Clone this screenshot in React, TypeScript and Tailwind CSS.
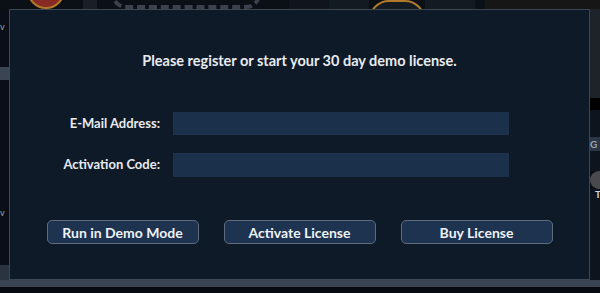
import React from 'react';

const buttonClass =
  'w-[152px] h-[24px] rounded-[5px] border border-[#5d6d7f] bg-[#1d3350] text-[14px] text-[#eef1f4] font-bold';

export default function App() {
  return (
    <div className="w-[600px] h-[293px] overflow-hidden bg-[#0a0f17] font-['Lato',sans-serif] flex flex-col">
      {/* Top strip of the app behind the dialog */}
      <div className="h-[9px] flex overflow-hidden bg-[#0b0f16]">
        <div className="w-[27px]" />
        <div className="w-[38px] h-[38px] -mt-[29px] rounded-full bg-[#8a2a24] border-2 border-[#b07a2a]" />
        <div className="w-[18px]" />
        <div className="w-[14px] bg-[#1a1f27]" />
        <div className="w-[14px]" />
        <div className="w-[150px] h-[30px] -mt-[21px] rounded-full border-4 border-dashed border-[#5b6472] opacity-60" />
        <div className="w-[28px]" />
        <div className="w-[40px] bg-[#10151d]" />
        <div className="w-[40px] bg-[#141a22]" />
        <div className="w-[56px] h-[40px] rounded-full border-2 border-[#b07a2a] bg-[#141a22]" />
        <div className="w-[50px] bg-[#141a22]" />
        <div className="w-[10px]" />
        <div className="flex-1 bg-[#161616]" />
      </div>

      <div className="h-[271px] flex">
        {/* Left edge */}
        <div className="w-[9px] flex flex-col text-[9px] leading-none text-[#9aa4b0]">
          <div className="h-[13px]" />
          <div className="h-[10px]">v</div>
          <div className="h-[35px]" />
          <div className="h-[13px] bg-[#3a4452]" />
          <div className="h-[128px]" />
          <div className="h-[10px]">v</div>
          <div className="h-[47px]" />
          <div className="h-[15px] bg-[#2a3340]" />
        </div>

        {/* License dialog */}
        <div className="w-[581px] border border-[#3c4756] bg-[#0f1a29] flex flex-col items-center text-[#e8ebef] font-bold">
          <div className="mt-[42px] text-[14.5px] leading-[18px]">
            Please register or start your 30 day demo license.
          </div>

          <div className="mt-[42px] flex flex-col gap-[18px] self-start">
            <div className="flex items-center gap-[13px]">
              <div className="w-[150px] text-right text-[13px]">E-Mail Address:</div>
              <div className="w-[336px] h-[23px] bg-[#1b304b]" />
            </div>
            <div className="flex items-center gap-[13px]">
              <div className="w-[150px] text-right text-[13px]">Activation Code:</div>
              <div className="w-[336px] h-[24px] bg-[#1b304b]" />
            </div>
          </div>

          <div className="mt-[43px] flex gap-[25px]">
            <button className={buttonClass}>Run in Demo Mode</button>
            <button className={buttonClass}>Activate License</button>
            <button className={buttonClass}>Buy License</button>
          </div>
        </div>

        {/* Right edge */}
        <div className="w-[10px] flex flex-col text-[10px] leading-none font-bold">
          <div className="h-[89px] bg-[#1e2229]" />
          <div className="h-[12px] bg-black" />
          <div className="h-[27px] bg-[#0e141d]" />
          <div className="h-[14px] leading-[14px] bg-[#2c3644] text-[#9aa4b0]">G</div>
          <div className="h-[20px] bg-[#0e141d]" />
          <div className="h-[18px] w-[18px] rounded-full bg-[#4a4a4e]" />
          <div className="h-[12px] pl-[5px] text-[#cfd5dc] bg-[#0e141d]">T</div>
          <div className="flex-1 bg-[#0e141d]" />
        </div>
      </div>

      <div className="h-[7px] bg-[#3a4452]" />
      <div className="flex-1 bg-[#070b11]" />
    </div>
  );
}
